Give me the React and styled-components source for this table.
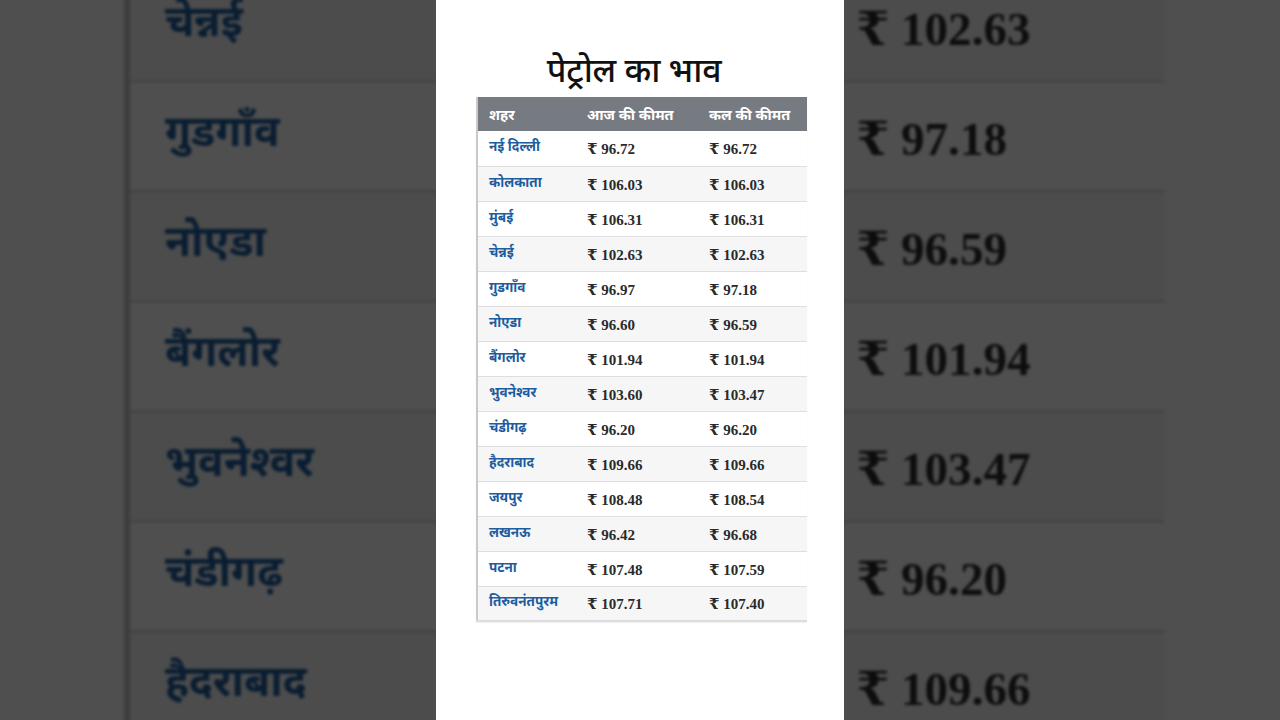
import React from 'react';
import styled, { createGlobalStyle } from 'styled-components';

const ROWS = [
    ['नई दिल्ली', '96.72', '96.72'],
    ['कोलकाता', '106.03', '106.03'],
    ['मुंबई', '106.31', '106.31'],
    ['चेन्नई', '102.63', '102.63'],
    ['गुडगाँव', '96.97', '97.18'],
    ['नोएडा', '96.60', '96.59'],
    ['बैंगलोर', '101.94', '101.94'],
    ['भुवनेश्वर', '103.60', '103.47'],
    ['चंडीगढ़', '96.20', '96.20'],
    ['हैदराबाद', '109.66', '109.66'],
    ['जयपुर', '108.48', '108.54'],
    ['लखनऊ', '96.42', '96.68'],
    ['पटना', '107.48', '107.59'],
    ['तिरुवनंतपुरम', '107.71', '107.40'],
];

const GlobalStyle = createGlobalStyle`
    html, body {
        margin: 0;
        padding: 0;
        height: 100%;
        background: #4f4f4f;
        overflow: hidden;
        font-family: "Noto Sans", "Noto Sans Devanagari", "Lohit Devanagari", sans-serif;
    }
`;

const Stage = styled.div`
    position: relative;
    width: 1280px;
    height: 720px;
    overflow: hidden;
    display: flex;
    justify-content: center;
    background: #4f4f4f;
`;

// blurred, darkened zoom of the same frame behind the short
const Backdrop = styled.div`
    position: absolute;
    left: 0;
    top: 0;
    transform-origin: 0 0;
    transform: translate(-1372px, -772px) scale(3.143);
    filter: brightness(0.31) blur(0.5px);
    display: flex;
    justify-content: center;
    width: 1280px;
`;

const Panel = styled.div`
    position: relative;
    width: 408px;
    height: 720px;
    background: #fff;
    display: flex;
    flex-direction: column;
    padding: 47px 0 0 40px;
    box-sizing: border-box;
`;

const Title = styled.h1`
    margin: 0 0 5px;
    width: 330px;
    padding-right: 14px;
    box-sizing: border-box;
    text-align: center;
    font-size: 34px;
    font-weight: 500;
    line-height: 45px;
    color: #111;
    letter-spacing: -0.3px;
`;

const Table = styled.table`
    width: 330px;
    border-collapse: collapse;
    table-layout: fixed;
    border-left: 2px solid #c9c9c9;
    border-bottom: 2px solid #dcdcdc;
    box-shadow: 0 1px 1px rgba(0, 0, 0, 0.05);
`;

const HeadCell = styled.th`
    width: ${p => p.$w}px;
    height: 34px;
    padding: 0 0 0 11px;
    background: #767a81;
    color: #fff;
    font-size: 14.5px;
    font-weight: 700;
    text-align: left;
    white-space: nowrap;
    box-sizing: border-box;
`;

const Row = styled.tr`
    height: 35px;
    background: ${p => (p.$odd ? '#f6f6f6' : '#fff')};
    border-top: 1px solid #dedede;
    &:first-child { border-top: none; }
`;

const CityCell = styled.td`
    padding: 0 0 4px 11px;
    color: #1d5c9e;
    font-size: 13.5px;
    font-weight: 700;
    white-space: nowrap;
`;

const PriceCell = styled.td`
    padding: 2px 0 0 11px;
    color: #2a2a2a;
    font-family: "Liberation Serif", "DejaVu Serif", serif;
    font-size: 15px;
    font-weight: 700;
    white-space: nowrap;
`;

function PriceFrame() {
    return (
        <Panel>
            <Title>पेट्रोल का भाव</Title>
            <Table>
                <thead>
                    <tr>
                        <HeadCell $w={99}>शहर</HeadCell>
                        <HeadCell $w={122}>आज की कीमत</HeadCell>
                        <HeadCell $w={109}>कल की कीमत</HeadCell>
                    </tr>
                </thead>
                <tbody>
                    {ROWS.map(([city, today, yesterday], i) => (
                        <Row key={city} $odd={i % 2 === 1}>
                            <CityCell>{city}</CityCell>
                            <PriceCell>₹ {today}</PriceCell>
                            <PriceCell>₹ {yesterday}</PriceCell>
                        </Row>
                    ))}
                </tbody>
            </Table>
        </Panel>
    );
}

export default function App() {
    return (
        <Stage>
            <GlobalStyle />
            <Backdrop aria-hidden="true">
                <PriceFrame />
            </Backdrop>
            <PriceFrame />
        </Stage>
    );
}
